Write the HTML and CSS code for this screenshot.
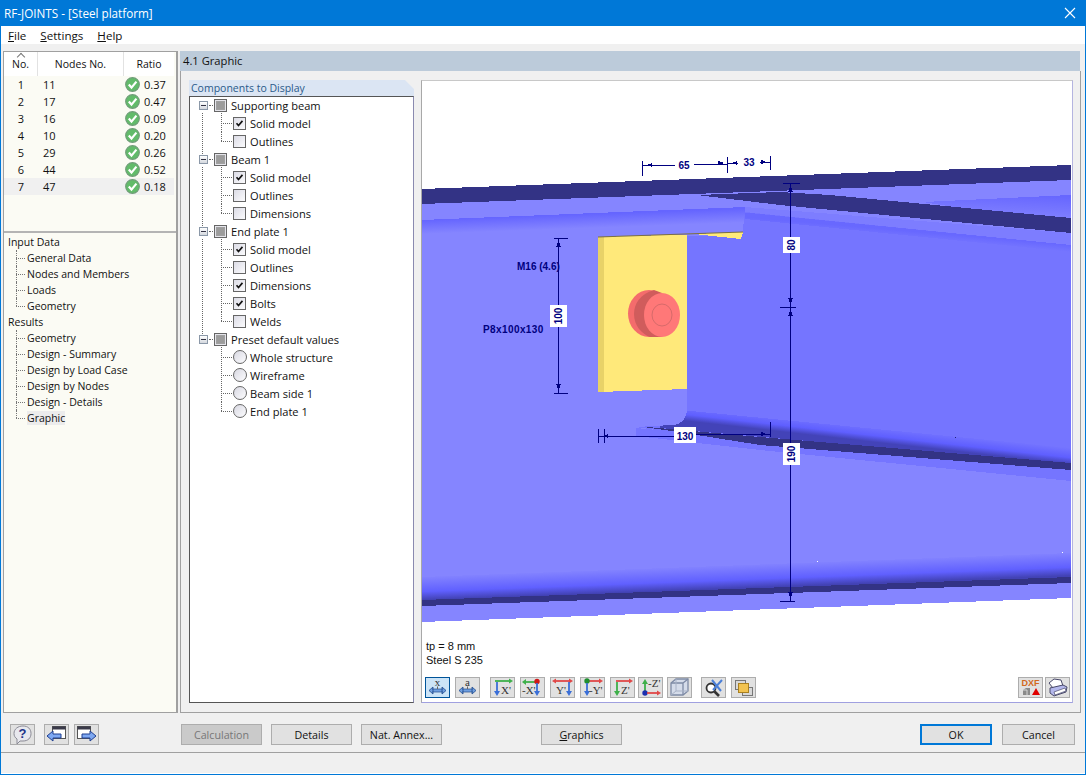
FILE: index.html
```html
<!DOCTYPE html>
<html lang="en">
<head>
<meta charset="utf-8">
<title>RF-JOINTS - [Steel platform]</title>
<link rel="stylesheet" href="styles.css">
</head>
<body>
<svg class="defs" width="0" height="0" aria-hidden="true">
  <defs>
    <symbol id="ok" viewBox="0 0 15 15">
      <circle cx="7.5" cy="7.5" r="6.8" fill="#62bb6a" stroke="#6f9d78" stroke-width="1.2"/>
      <path d="M3.8 7.6 6.5 10.6 11.4 4.6" fill="none" stroke="#fff" stroke-width="2.2"/>
    </symbol>
    <symbol id="tick" viewBox="0 0 13 13">
      <path d="M3 6.2 5.3 9 10 3.4" fill="none" stroke="#111" stroke-width="1.9"/>
    </symbol>
    <symbol id="move" viewBox="0 0 25 21">
      <path d="M7 13.500H18" stroke="#6f9fe0" stroke-width="3"/>
      <path d="M8 10 4 13.500 8 17ZM17 10 21 13.500 17 17Z" fill="#6f9fe0" stroke="#1f4a8e" stroke-width=".8"/>
      <path d="M7 12H18M7 15H18" stroke="#1f4a8e" stroke-width=".7"/>
      <path d="M12.500 9.500V12" stroke="#666"/>
    </symbol>
    <linearGradient id="gTop" gradientUnits="userSpaceOnUse" x1="422" y1="220" x2="422.5" y2="234">
      <stop offset="0" stop-color="#6565ff"/><stop offset="1" stop-color="#8585ff"/>
    </linearGradient>
    <linearGradient id="gFlangeR" gradientUnits="userSpaceOnUse" x1="1071" y1="197" x2="1070" y2="218">
      <stop offset="0" stop-color="#6767ff"/><stop offset="1" stop-color="#7e7eff"/>
    </linearGradient>
    <linearGradient id="gUnder" gradientUnits="userSpaceOnUse" x1="1071" y1="245" x2="1070.4" y2="252">
      <stop offset="0" stop-color="#6868ff"/><stop offset="1" stop-color="#7575ff"/>
    </linearGradient>
    <linearGradient id="gWebLow" gradientUnits="userSpaceOnUse" x1="1071" y1="448" x2="1069.2" y2="464">
      <stop offset="0" stop-color="#7575ff"/><stop offset=".6" stop-color="#5f5fff"/><stop offset="1" stop-color="#4343b8"/>
    </linearGradient>
    <linearGradient id="gLow" gradientUnits="userSpaceOnUse" x1="422" y1="576" x2="422.9" y2="600">
      <stop offset="0" stop-color="#8585ff"/><stop offset=".65" stop-color="#6060ff"/><stop offset="1" stop-color="#4242b4"/>
    </linearGradient>
  </defs>
</svg>

<div class="window">
  <header class="titlebar">
    <span class="title-text">RF-JOINTS - [Steel platform]</span>
    <svg class="close" width="12" height="12" viewBox="0 0 12 12"><path d="M1 1 11 11M11 1 1 11" stroke="#fff" stroke-width="1.1"/></svg>
  </header>
  <nav class="menubar">
    <span class="menu-item"><u>F</u>ile</span>
    <span class="menu-item"><u>S</u>ettings</span>
    <span class="menu-item"><u>H</u>elp</span>
  </nav>

  <main class="main">
    <aside class="side">
      <div class="nodes">
        <div class="nodes-row nodes-head">
          <span class="col-no sorted">No.</span>
          <span class="col-node">Nodes No.</span>
          <span class="col-ratio">Ratio</span>
        </div>
        <div class="nodes-row"><span class="col-no">1</span><span class="col-node val">11</span><span class="col-ratio val"><svg class="ok"><use href="#ok"/></svg>0.37</span></div>
        <div class="nodes-row"><span class="col-no">2</span><span class="col-node val">17</span><span class="col-ratio val"><svg class="ok"><use href="#ok"/></svg>0.47</span></div>
        <div class="nodes-row"><span class="col-no">3</span><span class="col-node val">16</span><span class="col-ratio val"><svg class="ok"><use href="#ok"/></svg>0.09</span></div>
        <div class="nodes-row"><span class="col-no">4</span><span class="col-node val">10</span><span class="col-ratio val"><svg class="ok"><use href="#ok"/></svg>0.20</span></div>
        <div class="nodes-row"><span class="col-no">5</span><span class="col-node val">29</span><span class="col-ratio val"><svg class="ok"><use href="#ok"/></svg>0.26</span></div>
        <div class="nodes-row"><span class="col-no">6</span><span class="col-node val">44</span><span class="col-ratio val"><svg class="ok"><use href="#ok"/></svg>0.52</span></div>
        <div class="nodes-row current"><span class="col-no">7</span><span class="col-node val">47</span><span class="col-ratio val"><svg class="ok"><use href="#ok"/></svg>0.18</span></div>
      </div>
      <div class="nav">
        <div class="nav-root">Input Data</div>
        <ul class="nav-list">
          <li>General Data</li>
          <li>Nodes and Members</li>
          <li>Loads</li>
          <li>Geometry</li>
        </ul>
        <div class="nav-root">Results</div>
        <ul class="nav-list">
          <li>Geometry</li>
          <li>Design - Summary</li>
          <li>Design by Load Case</li>
          <li>Design by Nodes</li>
          <li>Design - Details</li>
          <li><span class="nav-current">Graphic</span></li>
        </ul>
      </div>
    </aside>

    <section class="content">
      <h1 class="content-title">4.1 Graphic</h1>
      <div class="content-body">
        <div class="components">
          <div class="components-head">Components to Display</div>
          <div class="tree">
            <div class="group more">
              <div class="root"><span class="expander"></span><span class="box mixed"></span>Supporting beam</div>
              <div class="leaf"><span class="box"><svg class="tick"><use href="#tick"/></svg></span>Solid model</div>
              <div class="leaf"><span class="box"></span>Outlines</div>
            </div>
            <div class="group more">
              <div class="root"><span class="expander"></span><span class="box mixed"></span>Beam 1</div>
              <div class="leaf"><span class="box"><svg class="tick"><use href="#tick"/></svg></span>Solid model</div>
              <div class="leaf"><span class="box"></span>Outlines</div>
              <div class="leaf"><span class="box"></span>Dimensions</div>
            </div>
            <div class="group more">
              <div class="root"><span class="expander"></span><span class="box mixed"></span>End plate 1</div>
              <div class="leaf"><span class="box"><svg class="tick"><use href="#tick"/></svg></span>Solid model</div>
              <div class="leaf"><span class="box"></span>Outlines</div>
              <div class="leaf"><span class="box"><svg class="tick"><use href="#tick"/></svg></span>Dimensions</div>
              <div class="leaf"><span class="box"><svg class="tick"><use href="#tick"/></svg></span>Bolts</div>
              <div class="leaf"><span class="box"></span>Welds</div>
            </div>
            <div class="group">
              <div class="root"><span class="expander"></span><span class="box mixed"></span>Preset default values</div>
              <div class="leaf"><span class="radio"></span>Whole structure</div>
              <div class="leaf"><span class="radio"></span>Wireframe</div>
              <div class="leaf"><span class="radio"></span>Beam side 1</div>
              <div class="leaf"><span class="radio"></span>End plate 1</div>
            </div>
          </div>
        </div>

        <div class="viewport">
          <svg class="scene" viewBox="422 81 649 545" width="649" height="545" shape-rendering="crispEdges">
            <polygon points="422,203 1071,165 1071,598 422,622" fill="#8585ff"/>
            <polygon points="422,220 745,207 745,220 742,236 687,236 687,240 422,234" fill="url(#gTop)"/>
            <polygon points="745,207 1071,233 1071,246 745,212" fill="#7d7dff"/>
            <path d="M687,236 L742,236 L745,212 L1071,245 L1071,471 L760,445 L636,427 L672,425 Q687,424 687,408 Z" fill="#7575ff"/>
            <polygon points="745,212.500 1071,245 1071,252 745,219" fill="url(#gUnder)"/>
            <polygon points="923,202 1071,195 1071,220 960,208" fill="url(#gFlangeR)"/>
            <polygon points="660,408 1071,448 1071,464 660,428" fill="url(#gWebLow)"/>
            <polygon points="636,428 1071,470 1071,481 760,450 636,436" fill="#7575ff"/>
            <polygon points="636,426 760,437 1071,463 1071,470 760,445 672,431" fill="#333385"/>
            <path d="M636,427 L672,425 Q687,424 687,408 L687,380 L620,380 L620,427 Z" fill="#8585ff"/>
            <polygon points="422,189 1071,165 1071,180 422,204" fill="#333385"/>
            <polygon points="697,195 780,192 830,195 1071,218 1071,233 780,205" fill="#333385"/>
            <polygon points="422,577 1071,553 1071,577 422,600" fill="url(#gLow)"/>
            <polygon points="422,600 1071,577 1071,583 422,606" fill="#333385"/>

            <polygon points="694,234 743,232 741,239" fill="#ffe97a"/>
            <polygon points="598,237 687,234.500 687,389 598,392" fill="#ffe97a"/>
            <polygon points="598,237 604,237 604,392 598,392" fill="#e8d268"/>
            <path d="M598,237 L743,232" stroke="#7d7040" fill="none" shape-rendering="auto"/>

            <g shape-rendering="auto">
              <ellipse cx="649" cy="313.500" rx="21" ry="23.500" fill="#f46c6c"/>
              <path d="M654,290 C640,294 634,304 634,314 C634,326 642,334 650,337 L662,337 L662,293 Z" fill="#d05c5c"/>
              <ellipse cx="662" cy="315" rx="18" ry="22" fill="#ff7878"/>
              <ellipse cx="662" cy="315" rx="10" ry="11" fill="#ff7878" stroke="#d76a6a"/>
            </g>

            <g class="dim">
              <path d="M642.500 161V176M727.500 157V173M770.500 156V170M642 165.500H675M694 164.500H727M727 163.500H738M760 162.500H770"/>
              <path d="M790.500 183V601M783 183.500H800M780 307.500H796M780 601.500H795"/>
              <path d="M558.500 238V393M554 238.500H568M554 393.500H568"/>
              <path d="M598.500 429V443M604.500 429V443M770.500 422V437M598 436.500H674M696 434.500H770"/>
            </g>
            <g class="dim-arrow">
              <polygon points="646,165 652,163 652,167"/><polygon points="724,163 718,161 718,165"/>
              <polygon points="731,163 737,161 737,165"/><polygon points="767,162 761,160 761,164"/>
              <polygon points="790.500,186 788,192 793,192"/><polygon points="790.500,305 788,298 793,298"/>
              <polygon points="790.500,310 788,316 793,316"/><polygon points="790.500,598 788,592 793,592"/>
              <polygon points="558.500,241 556,247 561,247"/><polygon points="558.500,390 556,384 561,384"/>
              <polygon points="602,436 608,434 608,438"/><polygon points="767,434 761,432 761,436"/>
            </g>

            <g class="dim-box">
              <rect x="783" y="237" width="17" height="16"/>
              <rect x="783" y="443" width="17" height="22"/>
              <rect x="550" y="305" width="17" height="22"/>
              <rect x="674" y="427" width="22" height="16"/>
            </g>
            <g class="dim-text" shape-rendering="auto">
              <text x="684" y="169" text-anchor="middle">65</text>
              <text x="749" y="166" text-anchor="middle">33</text>
              <text x="685" y="440" text-anchor="middle">130</text>
              <text transform="translate(795 245) rotate(-90)" text-anchor="middle">80</text>
              <text transform="translate(795 454) rotate(-90)" text-anchor="middle">190</text>
              <text transform="translate(562 316) rotate(-90)" text-anchor="middle">100</text>
              <text x="517" y="270">M16 (4.6)</text>
              <text class="dim-wide" x="483" y="333">P8x100x130</text>
            </g>
            <rect x="817" y="561" width="1" height="1" fill="#fff"/>
            <rect x="1062" y="552" width="1" height="1" fill="#fff"/>
            <rect x="955" y="437" width="1" height="1" fill="#22227a"/>
          </svg>
          <div class="notes">
            <div>tp = 8 mm</div>
            <div>Steel S 235</div>
          </div>
          <div class="toolbar">
            <button class="tool pressed"><svg width="25" height="21" viewBox="0 0 25 21"><use href="#move"/><text class="tool-serif" x="12.500" y="9" text-anchor="middle">x</text></svg></button>
            <button class="tool"><svg width="25" height="21" viewBox="0 0 25 21"><use href="#move"/><text class="tool-serif" x="12.500" y="9" text-anchor="middle">a</text></svg></button>

            <button class="tool group-a"><svg width="25" height="21" viewBox="0 0 25 21">
              <path d="M5 4H19" fill="none" stroke="#3fb04a" stroke-width="1.800"/><path d="M19 1.500 23 4 19 6.500Z" fill="#3fb04a"/><path d="M7 5V17" stroke="#3a6fd8" stroke-width="1.800"/><path d="M4 14 7 19 10 14Z" fill="#3a6fd8"/><text class="tool-serif" x="11" y="17">X'</text></svg></button>
            <button class="tool"><svg width="25" height="21" viewBox="0 0 25 21">
              <path d="M5 5H18" stroke="#3fb04a" stroke-width="1.800"/><path d="M6 2 2 5 6 8Z" fill="#3fb04a"/><circle cx="17" cy="4.500" r="2.700" fill="#d01818"/><path d="M17 6V17" stroke="#3a6fd8" stroke-width="1.800"/><path d="M14 14 17 19 20 14Z" fill="#3a6fd8"/><text class="tool-serif" x="2" y="17">-X'</text></svg></button>
            <button class="tool"><svg width="25" height="21" viewBox="0 0 25 21">
              <path d="M5 4H20" stroke="#e04848" stroke-width="1.800"/><path d="M6 1.500 2 4 6 6.500ZM19 1.500 23 4 19 6.500Z" fill="#e04848"/><path d="M19 5V17" stroke="#3a6fd8" stroke-width="1.800"/><path d="M16 14 19 19 22 14Z" fill="#3a6fd8"/><text class="tool-serif" x="6" y="17">Y'</text></svg></button>
            <button class="tool"><svg width="25" height="21" viewBox="0 0 25 21">
              <path d="M7 4H20" stroke="#e04848" stroke-width="1.800"/><path d="M19 1.500 23 4 19 6.500Z" fill="#e04848"/><circle cx="7" cy="4" r="2.700" fill="#1f8f2f"/><path d="M7 6V17" stroke="#3a6fd8" stroke-width="1.800"/><path d="M4 14 7 19 10 14Z" fill="#3a6fd8"/><text class="tool-serif" x="9" y="17">-Y'</text></svg></button>
            <button class="tool"><svg width="25" height="21" viewBox="0 0 25 21">
              <path d="M6 4H20" stroke="#e04848" stroke-width="1.800"/><path d="M19 1.500 23 4 19 6.500Z" fill="#e04848"/><path d="M7 5V17" stroke="#3fb04a" stroke-width="1.800"/><path d="M4 14 7 19 10 14Z" fill="#3fb04a"/><text class="tool-serif" x="11" y="17">Z'</text></svg></button>
            <button class="tool tight"><svg width="25" height="21" viewBox="0 0 25 21">
              <path d="M7 5V16" stroke="#3fb04a" stroke-width="1.800"/><path d="M4 7 7 2 10 7Z" fill="#3fb04a"/><circle cx="7" cy="16" r="2.700" fill="#1c2fb0"/><path d="M9 16H20" stroke="#e04848" stroke-width="1.800"/><path d="M19 13.500 23 16 19 18.500Z" fill="#e04848"/><text class="tool-serif" x="10" y="10">-Z'</text></svg></button>
            <button class="tool tight-b"><svg width="25" height="21" viewBox="0 0 25 21">
              <path d="M4 6 9 2H21V14L16 18H4Z" fill="#d5dcea" stroke="#7d8aa5" stroke-width="1.300"/><path d="M4 6H16V18M16 6 21 2" fill="none" stroke="#7d8aa5" stroke-width="1.300"/><path d="M4 18 9 14H21M9 2V14" fill="none" stroke="#a8b2c6"/></svg></button>

            <button class="tool group-b"><svg width="25" height="21" viewBox="0 0 25 21">
              <circle cx="10" cy="11" r="4.500" fill="#fff" stroke="#333" stroke-width="1.800"/><path d="M13.500 14.500 18 19" stroke="#333" stroke-width="2.600"/><path d="M11 3 20 14M21 3 12 13" stroke="#4a7fd8" stroke-width="2"/></svg></button>
            <button class="tool"><svg width="25" height="21" viewBox="0 0 25 21">
              <rect x="4.500" y="3.500" width="10" height="9" fill="#d8d8d8" stroke="#777"/><rect x="11.500" y="10.500" width="10" height="8" fill="#d8d8d8" stroke="#777"/><rect x="7.500" y="6.500" width="10" height="9" fill="#f2c350" stroke="#a98020"/></svg></button>

            <button class="tool to-end"><svg width="25" height="21" viewBox="0 0 25 21">
              <text class="tool-dxf" x="12.500" y="9" text-anchor="middle">DXF</text><path d="M5 13 8 11H12V18H5Z" fill="#8a8a8a"/><path d="M5 13H9V18" fill="none" stroke="#d5d5d5"/><path d="M18 11 22 18H14Z" fill="#e00000"/></svg></button>
            <button class="tool snug"><svg width="25" height="21" viewBox="0 0 25 21">
              <path d="M4 6 9 2 16 3 18 9 8 11Z" fill="#fff" stroke="#4a4a6a"/><path d="M5 11 18 8 22 10 21 15 9 19 5 16Z" fill="#b4b8ec" stroke="#4a4a6a"/><path d="M9 15 20 11 21 14 10 18Z" fill="#fff" stroke="#4a4a6a" stroke-width=".7"/></svg></button>
          </div>
        </div>
      </div>
    </section>
  </main>

  <footer class="footer">
    <button class="tool ftool"><svg width="25" height="21" viewBox="0 0 25 21">
      <path d="M13 2C18 2 21 5 21 9.500S18 17 13 17H10L7 20V15C5 13.500 4 12 4 9.500 4 5 8 2 13 2Z" fill="#e8e8ee" stroke="#8a8a95"/><text class="tool-help" x="12.500" y="14" text-anchor="middle">?</text></svg></button>
    <button class="tool ftool m-a"><svg width="25" height="21" viewBox="0 0 25 21">
      <rect x="8.500" y="2.500" width="13" height="12" fill="#fff" stroke="#555"/><rect x="8.500" y="2.500" width="13" height="3" fill="#3a3a4a"/><path d="M3 12 9 7V10H17V14H9V17Z" fill="#7ea8f2" stroke="#1f3f90"/></svg></button>
    <button class="tool ftool"><svg width="25" height="21" viewBox="0 0 25 21">
      <rect x="3.500" y="2.500" width="13" height="12" fill="#fff" stroke="#555"/><rect x="3.500" y="2.500" width="13" height="3" fill="#3a3a4a"/><path d="M22 12 16 7V10H8V14H16V17Z" fill="#7ea8f2" stroke="#1f3f90"/></svg></button>
    <button class="btn disabled m-b">Calculation</button>
    <button class="btn">Details</button>
    <button class="btn">Nat. Annex...</button>
    <button class="btn m-c"><u>G</u>raphics</button>
    <button class="btn default m-d">OK</button>
    <button class="btn cancel">Cancel</button>
  </footer>
  <div class="statusbar"></div>
</div>
</body>
</html>
```
FILE: styles.css
```css
* { box-sizing: border-box; }
html, body { margin: 0; padding: 0; }
body { width: 1086px; height: 775px; overflow: hidden; font-family: "Open Sans", "Liberation Sans", sans-serif; font-size: 11px; color: #111; }
.defs { position: absolute; }

.window { width: 1086px; height: 775px; display: flex; flex-direction: column; background: #f0f0f0; border: 1px solid #0078d7; border-top: 0; }

.titlebar { height: 26px; margin: 0 -1px; background: #0078d7; color: #fff; display: flex; align-items: center; justify-content: space-between; padding: 0 10px 0 4px; font-size: 11.700px; }
.menubar { height: 18px; background: #fff; display: flex; align-items: center; padding-left: 7px; gap: 14px; font-size: 11.600px; }
u { text-decoration: underline; }

.main { flex: 1; min-height: 0; display: flex; gap: 2px; padding: 7px 4px 0 2px; }

.side { width: 175px; display: flex; flex-direction: column; background: #fbfbf4; border: 1px solid #a0a0a0; border-right-width: 2px; }
.nodes { height: 181px; border-bottom: 2px solid #b4b4b4; padding-right: 2px; }
.nodes-row { height: 17px; display: grid; grid-template-columns: 34px 86px 50px; align-items: center; }
.nodes-head { height: 24px; background: #fff; position: relative; font-size: 10.500px; }
.nodes-head span { height: 24px; line-height: 24px; text-align: center; border-right: 1px solid #e2e2e2; }
.nodes-head .col-ratio { border-right: 0; }
.sorted { position: relative; }
.sorted::before { content: ""; position: absolute; left: 14px; top: 2px; width: 5px; height: 5px; border-left: 1px solid #777; border-top: 1px solid #777; transform: rotate(45deg); }
.col-no { text-align: center; }
.col-node.val { padding-left: 5px; }
.col-ratio.val { display: flex; align-items: center; padding-left: 1px; gap: 4px; }
.ok { width: 15px; height: 15px; flex: none; }
.current { background: #f0f0f0; }

.nav { flex: 1; padding-top: 1px; font-size: 10.500px; }
.nav-root { height: 16px; line-height: 16px; padding-left: 4px; }
.nav-list { list-style: none; margin: 0 0 0 12px; padding: 0; }
.nav-list li { height: 16px; line-height: 16px; padding-left: 11px; position: relative; }
.nav-list li::before { content: ""; position: absolute; left: 0; top: 0; height: 16px; border-left: 1px dotted #777; }
.nav-list li::after { content: ""; position: absolute; left: 0; top: 8px; width: 9px; border-top: 1px dotted #777; }
.nav-list li:last-child::before { height: 8px; }
.nav-current { background: #ececec; }

.content { flex: 1; min-width: 0; display: flex; flex-direction: column; }
.content-title { margin: 0 1px 0 0; height: 20px; line-height: 20px; background: #bccbda; font-weight: 400; font-size: 11.200px; padding-left: 3px; }
.content-body { flex: 1; min-height: 0; display: flex; gap: 7px; padding: 9px 7px 9px 8px; border: 1px solid #a0a0a0; border-top: 0; }

.components { width: 225px; display: flex; flex-direction: column; }
.components-head { height: 16px; line-height: 16px; font-size: 10.500px; padding-left: 2px; color: #2a5a8a; background: #dbe5f3; clip-path: polygon(0 0, 216px 0, 100% 9px, 100% 100%, 0 100%); }
.tree { flex: 1; background: #fff; border: 1px solid #555; border-right-color: #8a8ab0; font-size: 11.100px; }
.group { position: relative; }
.group:first-child { margin-top: -1px; }
.group.more::before { content: ""; position: absolute; left: 12px; top: 17px; bottom: -8px; border-left: 1px dotted #666; }
.root, .leaf { height: 18px; display: flex; align-items: center; position: relative; }
.root { padding-left: 9px; gap: 4px; }
.expander { width: 9px; height: 9px; background: linear-gradient(#fff, #d4d8de); border: 1px solid #8b98a8; position: relative; }
.expander::before { content: ""; position: absolute; left: 1px; top: 3px; width: 5px; border-top: 1px solid #334; }
.expander::after { content: ""; position: absolute; left: 9px; top: 3px; width: 6px; border-top: 1px dotted #666; }
.root .expander { margin-right: 2px; }
.leaf { padding-left: 43px; gap: 4px; }
.leaf::before { content: ""; position: absolute; left: 31px; top: -1px; height: 19px; border-left: 1px dotted #666; }
.leaf::after { content: ""; position: absolute; left: 31px; top: 9px; width: 11px; border-top: 1px dotted #666; }
.leaf:last-child::before { height: 10px; }
.box { width: 13px; height: 13px; flex: none; display: block; background: linear-gradient(135deg, #dcdce6, #fbfbfd); border: 1px solid #666; }
.box.mixed { background: #fff; box-shadow: inset 0 0 0 1px #e4e4ea, inset 0 0 0 2px #a0a0a0, inset 0 0 0 9px #9c9c9c; }
.tick { display: block; width: 11px; height: 11px; }
.radio { width: 14px; height: 14px; flex: none; border-radius: 50%; background: linear-gradient(135deg, #d8d8e2, #fcfcfe); border: 1.500px solid #666; margin-right: -1px; }

.viewport { flex: 1; min-width: 0; background: #fff; border: 1px solid #a8a8a8; border-bottom-color: #a0a0e0; border-right-color: #b4b4e0; border-top-color: #c8c8c8; display: flex; flex-direction: column; }
.scene { display: block; flex: none; }
.notes { font-family: "Liberation Sans", sans-serif; font-size: 11px; line-height: 14px; padding: 13px 0 0 4px; height: 51px; color: #111; }
.toolbar { display: flex; gap: 5px; padding: 0 2px 0 3px; }
.tool { width: 25px; height: 21px; padding: 0; flex: none; border: 1px solid #adadad; background: #e1e1e1; display: block; overflow: hidden; }
.tool svg { display: block; margin: -1px; }
.pressed { background: #cce4f7; border-color: #005499; }
.tool-serif { font-family: "Liberation Serif", serif; font-size: 11px; fill: #333; }
.tool-dxf { font-family: "Liberation Sans", sans-serif; font-size: 9px; font-weight: 700; fill: #d2691e; }
.tool-help { font-family: "Liberation Sans", sans-serif; font-size: 13px; font-weight: 700; fill: #23338a; }
.group-a { margin-left: 5px; }
.tight { margin-left: -2px; }
.tight-b { margin-left: -1px; }
.group-b { margin-left: 4px; }
.to-end { margin-left: auto; }
.snug { margin-left: -3px; }

.dim path { fill: none; stroke: #000080; stroke-width: 1; }
.dim-arrow polygon { fill: #000080; }
.dim-box rect { fill: #fff; }
.dim-text text { font-family: "Liberation Sans", sans-serif; font-size: 10px; font-weight: 700; fill: #000080; }
.dim-text .dim-wide { letter-spacing: .4px; }

.footer { height: 40px; flex: none; display: flex; align-items: flex-start; padding: 11px 0 0 9px; border-bottom: 1px solid #a0a0a0; }
.ftool { margin-right: 5px; }
.m-a { margin-left: 4px; }
.btn { height: 21px; width: 81px; padding: 0; border: 1px solid #adadad; background: #e1e1e1; font-family: inherit; font-size: 10.700px; color: #111; margin-right: 9px; }
.disabled { background: #cacaca; color: #777; }
.m-b { margin-left: 77px; }
.m-c { margin-left: 90px; }
.m-d { margin-left: 289px; }
.default { width: 72px; border: 2px solid #0078d7; margin-right: 10px; }
.cancel { width: 73px; margin-right: 0; }
.statusbar { height: 21px; flex: none; border-bottom: 1px solid #fff; }
```
